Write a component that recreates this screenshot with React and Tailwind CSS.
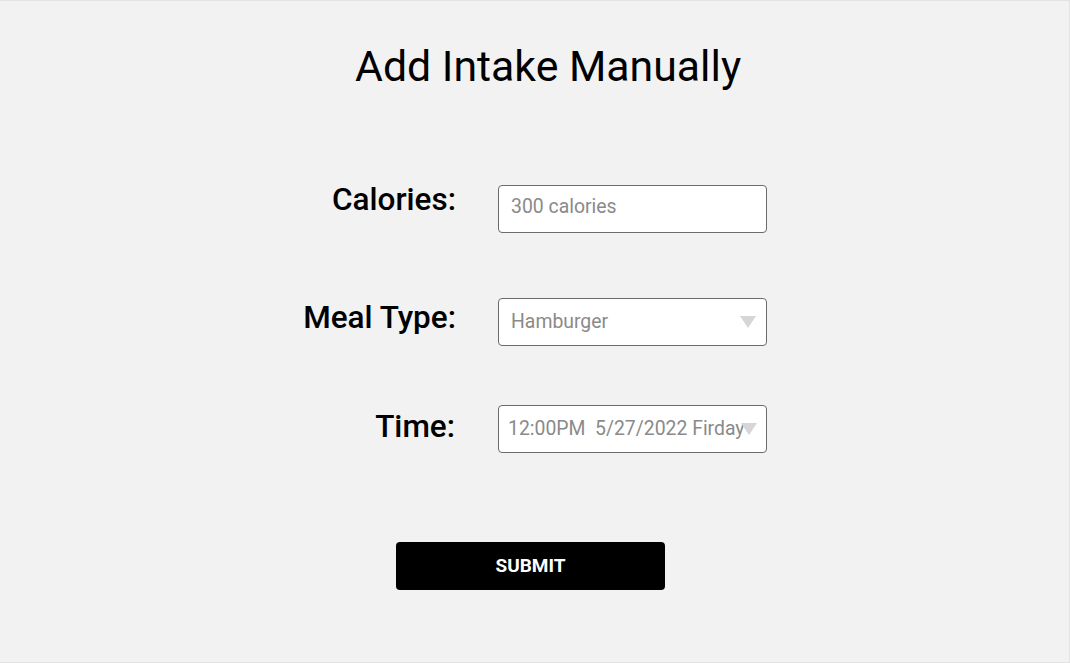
import React from 'react';

const Arrow = () => (
  <svg width="16" height="12" viewBox="0 0 16 12" className="shrink-0">
    <path d="M0 0 L16 0 L8 12 Z" fill="#d6d6d6" />
  </svg>
);

const Label = ({ children }) => (
  <div className="w-[456px] text-right text-[31.5px] font-medium leading-none text-black">
    {children}
  </div>
);

const Field = ({ children }) => (
  <div className="ml-[42px] flex h-[48px] w-[269px] items-center overflow-hidden rounded-[4px] border border-[#6b6b6b] bg-white text-[19.4px] text-[#8a8a8a]">
    {children}
  </div>
);

export default function App() {
  return (
    <div
      className="flex h-[663px] w-full flex-col border-t border-b border-r border-[#e2e2e2] bg-[#f2f2f2]"
      style={{ fontFamily: 'Roboto, "Liberation Sans", sans-serif' }}
    >
      <h1 className="mt-[41px] ml-[355px] text-[42.8px] font-normal leading-[48px] text-black">
        Add Intake Manually
      </h1>

      <div className="mt-[95px] flex items-center">
        <Label>
          <span className="relative top-[-9px]">Calories:</span>
        </Label>
        <Field>
          <span className="relative top-[-2px] pl-[12px]">300 calories</span>
        </Field>
      </div>

      <div className="mt-[65px] flex items-center">
        <Label>
          <span className="relative top-[-4px]">Meal Type:</span>
        </Label>
        <Field>
          <span className="flex-1 pl-[12px]">Hamburger</span>
          <span className="pr-[10px]">
            <Arrow />
          </span>
        </Field>
      </div>

      <div className="mt-[59px] flex items-center">
        <Label>
          <span className="relative top-[-2px] pr-[1px]">Time:</span>
        </Label>
        <Field>
          <span className="whitespace-pre pl-[9px]">12:00PM  5/27/2022 Firday</span>
          <span className="ml-[-4px]">
            <Arrow />
          </span>
        </Field>
      </div>

      <div className="mt-[89px] ml-[396px]">
        <button className="flex h-[48px] w-[269px] items-center justify-center rounded-[4px] bg-black text-[19px] font-bold text-white">
          SUBMIT
        </button>
      </div>
    </div>
  );
}
